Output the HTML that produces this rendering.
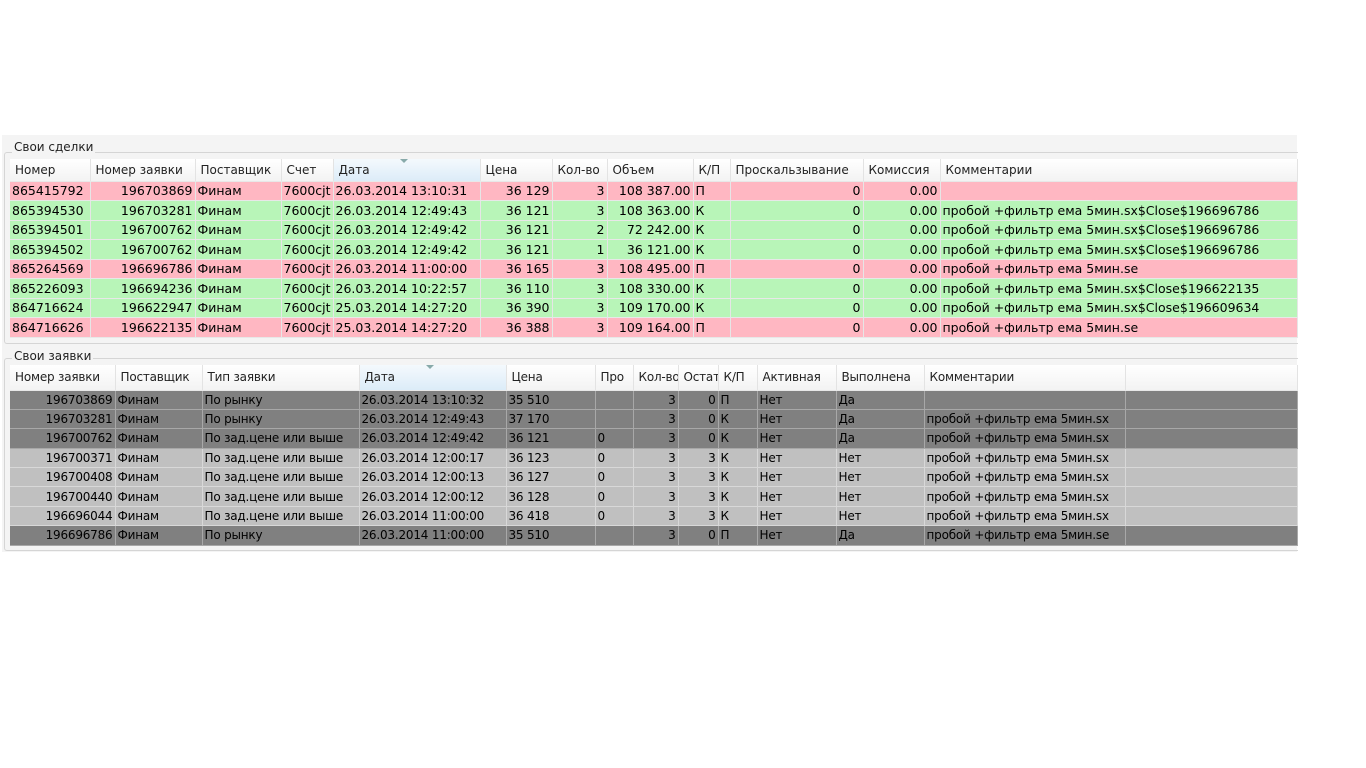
<!DOCTYPE html>
<html><head><meta charset="utf-8"><style>
body{margin:0;width:1366px;height:768px;background:#fff;position:relative;overflow:hidden;font-family:"DejaVu Sans","Liberation Sans",sans-serif;font-size:12.5px;color:#000}
.panel{position:absolute;left:2px;top:135px;width:1295px;height:417px;background:#f4f4f4}
.gb{position:absolute;left:4px;width:1293px;border:1px solid #d5d5d5;border-right:none;border-radius:3px 0 0 3px}
.lg{position:absolute;left:12px;background:#f4f4f4;padding:0 2px;font-size:12px;color:#222}
table{position:absolute;left:10px;border-collapse:collapse;table-layout:fixed}
td{padding:0 2px;white-space:nowrap;overflow:hidden;border-right:1px solid #e6e6e6;border-bottom:1px solid #e8e8e8}
thead td{background:linear-gradient(#fff,#f3f3f3);color:#222;font-size:12px;border-right:1px solid #e3e3e3;padding-left:5px}
thead td.s{background:linear-gradient(#f4f9fd,#dcecf8);position:relative}
thead td.s:after{content:"";position:absolute;left:66px;top:0;border:4px solid transparent;border-top:4px solid #8aa;border-bottom:0}
.r{text-align:right}
.p td{background:#ffb7c2}.g td{background:#b8f5b8}
.d td{background:#808080;border-color:#a8a8a8}.l td{background:#c0c0c0;border-color:#d8d8d8}
#t2 td{font-size:12px;letter-spacing:-0.2px}
</style></head><body>
<div class="panel"></div>
<div class="gb" style="top:152px;height:190px"></div>
<div class="lg" style="top:140px">Свои сделки</div>
<table style="top:159px;width:1287px">
<colgroup><col style="width:80px"><col style="width:105px"><col style="width:86px"><col style="width:52px"><col style="width:147px"><col style="width:72px"><col style="width:55px"><col style="width:86px"><col style="width:37px"><col style="width:133px"><col style="width:77px"><col style="width:357px"></colgroup>
<thead><tr style="height:22px"><td>Номер</td><td>Номер заявки</td><td>Поставщик</td><td>Счет</td><td class="s">Дата</td><td>Цена</td><td>Кол-во</td><td>Объем</td><td>К/П</td><td>Проскальзывание</td><td>Комиссия</td><td>Комментарии</td></tr></thead>
<tbody>
<tr class="p" style="height:19.5px"><td>865415792</td><td class="r">196703869</td><td>Финам</td><td>7600cjt</td><td>26.03.2014 13:10:31</td><td class="r">36 129</td><td class="r">3</td><td class="r">108 387.00</td><td>П</td><td class="r">0</td><td class="r">0.00</td><td></td></tr>
<tr class="g" style="height:19.5px"><td>865394530</td><td class="r">196703281</td><td>Финам</td><td>7600cjt</td><td>26.03.2014 12:49:43</td><td class="r">36 121</td><td class="r">3</td><td class="r">108 363.00</td><td>К</td><td class="r">0</td><td class="r">0.00</td><td>пробой +фильтр ема 5мин.sx$Close$196696786</td></tr>
<tr class="g" style="height:19.5px"><td>865394501</td><td class="r">196700762</td><td>Финам</td><td>7600cjt</td><td>26.03.2014 12:49:42</td><td class="r">36 121</td><td class="r">2</td><td class="r">72 242.00</td><td>К</td><td class="r">0</td><td class="r">0.00</td><td>пробой +фильтр ема 5мин.sx$Close$196696786</td></tr>
<tr class="g" style="height:19.5px"><td>865394502</td><td class="r">196700762</td><td>Финам</td><td>7600cjt</td><td>26.03.2014 12:49:42</td><td class="r">36 121</td><td class="r">1</td><td class="r">36 121.00</td><td>К</td><td class="r">0</td><td class="r">0.00</td><td>пробой +фильтр ема 5мин.sx$Close$196696786</td></tr>
<tr class="p" style="height:19.5px"><td>865264569</td><td class="r">196696786</td><td>Финам</td><td>7600cjt</td><td>26.03.2014 11:00:00</td><td class="r">36 165</td><td class="r">3</td><td class="r">108 495.00</td><td>П</td><td class="r">0</td><td class="r">0.00</td><td>пробой +фильтр ема 5мин.se</td></tr>
<tr class="g" style="height:19.5px"><td>865226093</td><td class="r">196694236</td><td>Финам</td><td>7600cjt</td><td>26.03.2014 10:22:57</td><td class="r">36 110</td><td class="r">3</td><td class="r">108 330.00</td><td>К</td><td class="r">0</td><td class="r">0.00</td><td>пробой +фильтр ема 5мин.sx$Close$196622135</td></tr>
<tr class="g" style="height:19.5px"><td>864716624</td><td class="r">196622947</td><td>Финам</td><td>7600cjt</td><td>25.03.2014 14:27:20</td><td class="r">36 390</td><td class="r">3</td><td class="r">109 170.00</td><td>К</td><td class="r">0</td><td class="r">0.00</td><td>пробой +фильтр ема 5мин.sx$Close$196609634</td></tr>
<tr class="p" style="height:19.5px"><td>864716626</td><td class="r">196622135</td><td>Финам</td><td>7600cjt</td><td>25.03.2014 14:27:20</td><td class="r">36 388</td><td class="r">3</td><td class="r">109 164.00</td><td>П</td><td class="r">0</td><td class="r">0.00</td><td>пробой +фильтр ема 5мин.se</td></tr>
</tbody></table>

<div class="gb" style="top:358px;height:191px"></div>
<div class="lg" style="top:349px">Свои заявки</div>
<table id="t2" style="top:365px;width:1287px">
<colgroup><col style="width:105px"><col style="width:87px"><col style="width:157px"><col style="width:147px"><col style="width:89px"><col style="width:38px"><col style="width:45px"><col style="width:40px"><col style="width:39px"><col style="width:79px"><col style="width:88px"><col style="width:201px"><col style="width:172px"></colgroup>
<thead><tr style="height:25px"><td>Номер заявки</td><td>Поставщик</td><td>Тип заявки</td><td class="s">Дата</td><td>Цена</td><td>Про</td><td>Кол-во</td><td>Остаток</td><td>К/П</td><td>Активная</td><td>Выполнена</td><td>Комментарии</td><td></td></tr></thead>
<tbody>
<tr class="d" style="height:19.4px"><td class="r">196703869</td><td>Финам</td><td>По рынку</td><td>26.03.2014 13:10:32</td><td>35 510</td><td></td><td class="r">3</td><td class="r">0</td><td>П</td><td>Нет</td><td>Да</td><td></td><td></td></tr>
<tr class="d" style="height:19.4px"><td class="r">196703281</td><td>Финам</td><td>По рынку</td><td>26.03.2014 12:49:43</td><td>37 170</td><td></td><td class="r">3</td><td class="r">0</td><td>К</td><td>Нет</td><td>Да</td><td>пробой +фильтр ема 5мин.sx</td><td></td></tr>
<tr class="d" style="height:19.4px"><td class="r">196700762</td><td>Финам</td><td>По зад.цене или выше</td><td>26.03.2014 12:49:42</td><td>36 121</td><td>0</td><td class="r">3</td><td class="r">0</td><td>К</td><td>Нет</td><td>Да</td><td>пробой +фильтр ема 5мин.sx</td><td></td></tr>
<tr class="l" style="height:19.4px"><td class="r">196700371</td><td>Финам</td><td>По зад.цене или выше</td><td>26.03.2014 12:00:17</td><td>36 123</td><td>0</td><td class="r">3</td><td class="r">3</td><td>К</td><td>Нет</td><td>Нет</td><td>пробой +фильтр ема 5мин.sx</td><td></td></tr>
<tr class="l" style="height:19.4px"><td class="r">196700408</td><td>Финам</td><td>По зад.цене или выше</td><td>26.03.2014 12:00:13</td><td>36 127</td><td>0</td><td class="r">3</td><td class="r">3</td><td>К</td><td>Нет</td><td>Нет</td><td>пробой +фильтр ема 5мин.sx</td><td></td></tr>
<tr class="l" style="height:19.4px"><td class="r">196700440</td><td>Финам</td><td>По зад.цене или выше</td><td>26.03.2014 12:00:12</td><td>36 128</td><td>0</td><td class="r">3</td><td class="r">3</td><td>К</td><td>Нет</td><td>Нет</td><td>пробой +фильтр ема 5мин.sx</td><td></td></tr>
<tr class="l" style="height:19.4px"><td class="r">196696044</td><td>Финам</td><td>По зад.цене или выше</td><td>26.03.2014 11:00:00</td><td>36 418</td><td>0</td><td class="r">3</td><td class="r">3</td><td>К</td><td>Нет</td><td>Нет</td><td>пробой +фильтр ема 5мин.sx</td><td></td></tr>
<tr class="d" style="height:19.4px"><td class="r">196696786</td><td>Финам</td><td>По рынку</td><td>26.03.2014 11:00:00</td><td>35 510</td><td></td><td class="r">3</td><td class="r">0</td><td>П</td><td>Нет</td><td>Да</td><td>пробой +фильтр ема 5мин.se</td><td></td></tr>
</tbody></table>
</body></html>
